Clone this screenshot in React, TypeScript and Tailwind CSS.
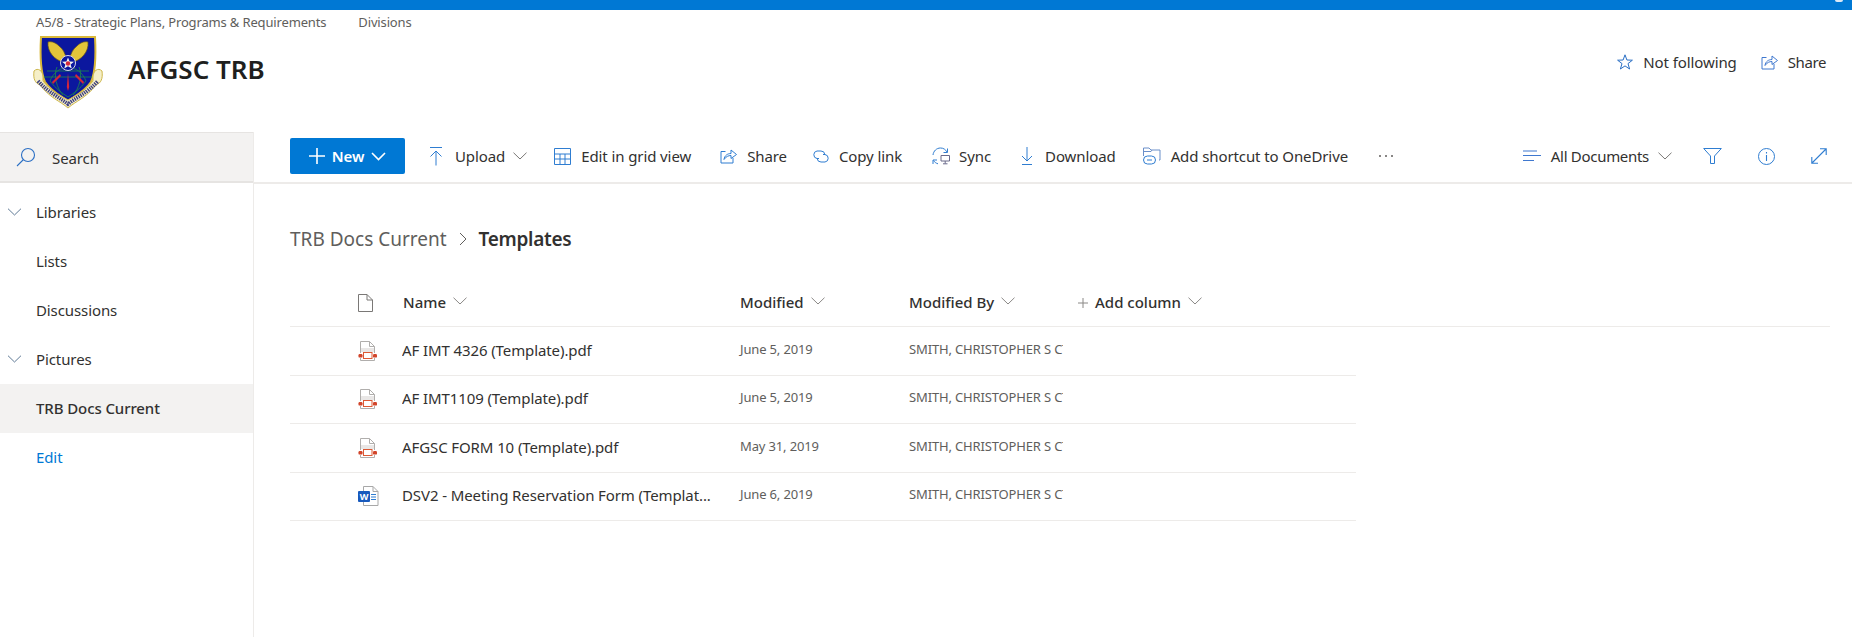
import React from "react";

function Chevron({ className = "", color = "#605e5c" }: { className?: string; color?: string }) {
  return (
    <svg className={className} width="14" height="8" viewBox="0 0 14 8" fill="none">
      <path d="M0.5 0.7 L7 7 L13.5 0.7" stroke={color} strokeWidth="1" />
    </svg>
  );
}

function Logo() {
  return (
    <svg width="72" height="74" viewBox="0 0 72 74" className="shrink-0">
      <path d="M8 2 L62 2 C63 20 63 36 58 47 C52 56 44 60 35 66 C26 60 18 56 12 47 C7 36 7 20 8 2Z" fill="#0b179e" stroke="#d9b83a" strokeWidth="2" />
      <path d="M17 46 C24 28 46 28 53 46 C47 54 41 58 35 62 C29 58 23 54 17 46Z" fill="none" stroke="#1e8a4a" strokeWidth="0.8" />
      <path d="M11 42 H59 M24 32 C20 40 24 54 30 60 M46 32 C50 40 46 54 40 60 M14 36 H56" stroke="#1e8a4a" strokeWidth="0.8" fill="none" />
      <path d="M30 27 C22 25 14 17 15 7 C19 6 23 8 26 11 C30 14 32 18 33 23Z" fill="#e3c53a" stroke="#6d5a14" strokeWidth="0.7" />
      <path d="M40 27 C48 25 56 17 55 7 C51 6 47 8 44 11 C40 14 38 18 37 23Z" fill="#e3c53a" stroke="#6d5a14" strokeWidth="0.7" />
      <circle cx="35" cy="28" r="7.5" fill="#0b179e" stroke="#d8d8e8" strokeWidth="1" />
      <path d="M35 22.5 L36.6 26.6 L41 26.8 L37.6 29.5 L38.8 33.5 L35 31.2 L31.2 33.5 L32.4 29.5 L29 26.8 L33.4 26.6Z" fill="#f4f4f4" />
      <circle cx="35" cy="28.5" r="2.2" fill="#d52b3a" />
      <path d="M35 38 L33.8 52 L35 56 L36.2 52Z M27 39 L19 47 L20 49 L28 41Z M43 39 L51 47 L50 49 L42 41Z" fill="#d4263a" />
      <path d="M1 36 C0 44 2 48 7 50 C17 63 27 66 35 73 C43 66 53 63 63 50 C68 48 70 44 69 36 C65 32 60 36 60 42 L60 46 C52 56 44 60 35 65 C26 60 18 56 10 46 L10 42 C10 36 5 32 1 36Z" fill="#f5efc8" stroke="#cdb64a" strokeWidth="1" />
      <path d="M5 46 C16 58 26 62 35 69 C44 62 54 58 65 46" fill="none" stroke="#3d3f80" strokeWidth="3.8" strokeDasharray="1.4 0.9" />
    </svg>
  );
}

function SearchIcon() {
  return (
    <svg width="20" height="20" viewBox="0 0 20 20" fill="none">
      <circle cx="12" cy="8" r="6.5" stroke="#2b6fc4" strokeWidth="1.1" />
      <path d="M7.5 12.5 L1 19" stroke="#2b6fc4" strokeWidth="1.1" />
    </svg>
  );
}

function ShareIcon({ color = "#2f7dd1" }: { color?: string }) {
  return (
    <svg width="17" height="15" viewBox="0 0 17 15" fill="none">
      <path d="M5.5 2.5 H1 V14 H13 V9" stroke={color} strokeWidth="1" />
      <path d="M4 10.5 C4.5 6.5 7.5 4.5 11 4.5 V1 L16.5 5.5 L11 9.5 V6.5 C8.5 6.5 6 7.5 4 10.5Z" stroke={color} strokeWidth="1" />
    </svg>
  );
}

function UploadIcon() {
  return (
    <svg width="14" height="19" viewBox="0 0 14 19" fill="none">
      <path d="M1 0.5 H13 M7 18.5 V4 M1.5 9.5 L7 4 L12.5 9.5" stroke="#2f7dd1" strokeWidth="1" />
    </svg>
  );
}

function GridIcon() {
  return (
    <svg width="17" height="17" viewBox="0 0 17 17" fill="none">
      <path d="M0.5 0.5 H16.5 V16.5 H0.5Z M0.5 6 H16.5 M0.5 11 H16.5 M6 6 V16.5 M11 6 V16.5" stroke="#2f7dd1" strokeWidth="1" />
    </svg>
  );
}

function LinkIcon() {
  return (
    <svg width="18" height="13" viewBox="0 0 18 13" fill="none">
      <path d="M7 8.5 H5 A3.8 3.8 0 0 1 5 1 H9 A3.8 3.8 0 0 1 12.8 4.5" stroke="#2f7dd1" strokeWidth="1" />
      <path d="M11 4.5 H13 A3.8 3.8 0 0 1 13 12 H9 A3.8 3.8 0 0 1 5.2 8.5" stroke="#2f7dd1" strokeWidth="1" />
    </svg>
  );
}

function SyncIcon() {
  return (
    <svg width="18" height="18" viewBox="0 0 18 18" fill="none">
      <path d="M1 8 C1.5 4 4.5 1 8.5 1 C11.5 1 13.5 2.5 15 5 M15.5 1.5 V5.5 H11.5" stroke="#2f7dd1" strokeWidth="1" />
      <path d="M1 17 V13 H5 M1.5 13.5 C2.5 15 4 16.3 6 16.8" stroke="#2f7dd1" strokeWidth="1" />
      <path d="M9 8.5 H17.5 V14 H9Z M13.2 14 V16.5 M11 16.8 H15.5" stroke="#6a6a8a" strokeWidth="1" />
    </svg>
  );
}

function DownloadIcon() {
  return (
    <svg width="12" height="18" viewBox="0 0 12 18" fill="none">
      <path d="M1 17.5 H11 M6 0 V14 M1 9 L6 14 L11 9" stroke="#2f7dd1" strokeWidth="1" />
    </svg>
  );
}

function ShortcutIcon() {
  return (
    <svg width="18" height="18" viewBox="0 0 18 18" fill="none">
      <path d="M0.5 9 V1 H6 L8 3 H17 V13 H16" stroke="#6b8fc9" strokeWidth="1" />
      <path d="M0.5 4.5 H8 L9 3" stroke="#6b8fc9" strokeWidth="1" />
      <rect x="0.5" y="9" width="12" height="8" rx="4" stroke="#2f7dd1" strokeWidth="1" />
      <path d="M4 13 H9" stroke="#2f7dd1" strokeWidth="1" />
    </svg>
  );
}

function PdfIcon() {
  return (
    <svg width="19" height="20" viewBox="0 0 19 20" fill="none">
      <path d="M2.5 12 V0.5 H11.5 L16.5 5.5 V12 M16.5 17 V19.5 H2.5 V17 M11.5 0.5 V5.5 H16.5" stroke="#b0aeac" strokeWidth="1" />
      <rect x="3" y="7" width="13" height="4" fill="#e9e7e6" />
      <rect x="5.5" y="11.5" width="8.5" height="6" stroke="#dc5a35" strokeWidth="1" fill="#fff" />
      <rect x="0.5" y="13" width="4" height="3.6" rx="1.2" fill="#d2452a" />
      <rect x="15" y="13" width="4" height="3.6" rx="1.2" fill="#d2452a" />
    </svg>
  );
}

function WordIcon() {
  return (
    <svg width="21" height="20" viewBox="0 0 21 20" fill="none">
      <path d="M5.5 5 V0.5 H15 L20 5.5 V19.5 H5.5 V16" stroke="#a8a8a8" strokeWidth="1" fill="#fff" />
      <path d="M15 0.5 V5.5 H20" stroke="#a8a8a8" strokeWidth="1" />
      <path d="M13 8.5 H18 M13 11 H18 M13 13.5 H18" stroke="#2f7dd1" strokeWidth="1" />
      <rect x="0" y="5" width="12" height="11" rx="1" fill="#185abd" />
      <text x="6" y="14" textAnchor="middle" fontSize="9" fontWeight="700" fill="#fff" fontFamily="Noto Sans, sans-serif">W</text>
    </svg>
  );
}

function ToolItem({
  icon,
  label,
  chevron,
  gap = "gap-[9px]",
  className = "",
  labelClass = "",
}: {
  icon: React.ReactNode;
  label: string;
  chevron?: boolean;
  gap?: string;
  className?: string;
  labelClass?: string;
}) {
  return (
    <div className={`flex items-center ${gap} ${className}`}>
      {icon}
      <span className={`text-[15px] text-[#323130] whitespace-nowrap ${labelClass}`}>{label}</span>
      {chevron && <Chevron className="-ml-[4px]" color="#7a7876" />}
    </div>
  );
}

const navItems = [
  { label: "Libraries", chevron: true },
  { label: "Lists" },
  { label: "Discussions" },
  { label: "Pictures", chevron: true },
  { label: "TRB Docs Current", active: true },
  { label: "Edit", link: true },
];

const files = [
  { name: "AF IMT 4326 (Template).pdf", date: "June 5, 2019", type: "pdf" },
  { name: "AF IMT1109 (Template).pdf", date: "June 5, 2019", type: "pdf" },
  { name: "AFGSC FORM 10 (Template).pdf", date: "May 31, 2019", type: "pdf" },
  { name: "DSV2 - Meeting Reservation Form (Templat...", date: "June 6, 2019", type: "word" },
];

function HeaderCell({ label, className = "" }: { label: string; className?: string }) {
  return (
    <div className={`flex items-center gap-[7px] ${className}`}>
      <span className="text-[15px] font-medium text-[#323130] whitespace-nowrap tracking-normal">{label}</span>
      <Chevron className="-mt-[3px]" color="#8a8886" />
    </div>
  );
}

export default function App() {
  return (
    <div
      className="w-[1852px] h-[637px] overflow-hidden bg-white flex flex-col tracking-[-0.1px]"
      style={{ fontFamily: '"Noto Sans", "Open Sans", sans-serif' }}
    >
      <div className="h-[10px] bg-[#0078d4] shrink-0 relative">
        <div className="absolute right-[9px] top-0 w-[8px] h-[2px] rounded-b-full bg-[#dce9f6]" />
      </div>

      <header className="h-[122px] shrink-0 flex flex-col">
        <nav className="h-[25px] pl-[36px] flex items-center gap-[32px] text-[13px] text-[#605e5c] tracking-[-0.15px]">
          <span>A5/8 - Strategic Plans, Programs &amp; Requirements</span>
          <span>Divisions</span>
        </nav>
        <div className="flex items-start pl-[33px] pr-[26px]">
          <Logo />
          <h1 className="ml-[23px] mt-[18px] text-[26px] font-semibold leading-[32px] text-[#201f1e] tracking-normal">AFGSC TRB</h1>
          <div className="ml-auto mt-[16px] flex items-center gap-[24px]">
            <ToolItem
              gap="gap-[10px]"
              icon={
                <svg width="16" height="16" viewBox="0 0 16 16" fill="none">
                  <path d="M8 0.8 L9.9 6 L15.4 6.2 L11 9.6 L12.6 15 L8 11.9 L3.4 15 L5 9.6 L0.6 6.2 L6.1 6Z" stroke="#2b6fc4" strokeWidth="1" />
                </svg>
              }
              label="Not following"
            />
            <ToolItem gap="gap-[10px]" icon={<ShareIcon color="#3f78cf" />} label="Share" labelClass="tracking-[-0.4px]" />
          </div>
        </div>
      </header>

      <div className="flex-1 flex min-h-0">
        <aside className="w-[254px] shrink-0 border-r border-[#edebe9] flex flex-col">
          <div className="h-[51px] bg-[#f3f2f1] border-t border-b-2 border-[#e6e4e2] flex items-center pl-[16px] gap-[16px] shrink-0">
            <SearchIcon />
            <span className="text-[15px] text-[#323130] mt-[2px]">Search</span>
          </div>
          <ul className="pt-[5px]">
            {navItems.map((n) => (
              <li
                key={n.label}
                className={`h-[49px] flex items-center pl-[36px] relative text-[15px] ${
                  n.active ? "bg-[#f3f2f1] font-medium text-[#323130]" : n.link ? "text-[#0078d4]" : "text-[#323130]"
                }`}
              >
                {n.chevron && <Chevron className="absolute left-[7px] top-[20px] w-[15px]" color="#5f7a96" />}
                {n.label}
              </li>
            ))}
          </ul>
        </aside>

        <main className="flex-1 min-w-0 flex flex-col">
          <div className="h-[52px] shrink-0 border-b-2 border-[#edebe9] flex items-center pl-[36px] pr-[25px] pb-[2px]">
            <div className="w-[115px] h-[36px] rounded-[2px] bg-[#0078d4] flex items-center justify-center gap-[7px] text-white shrink-0">
              <svg width="16" height="16" viewBox="0 0 16 16" fill="none">
                <path d="M8 0 V16 M0 8 H16" stroke="#fff" strokeWidth="1.6" />
              </svg>
              <span className="text-[15px] font-semibold">New</span>
              <svg width="15" height="9" viewBox="0 0 15 9" fill="none">
                <path d="M1 1 L7.5 7.5 L14 1" stroke="#fff" strokeWidth="1.6" />
              </svg>
            </div>
            <div className="ml-[24px] flex items-center gap-[27px]">
              <ToolItem gap="gap-[12px]" icon={<UploadIcon />} label="Upload" chevron />
              <ToolItem gap="gap-[10px]" icon={<GridIcon />} label="Edit in grid view" />
              <ToolItem gap="gap-[10px]" className="ml-[2px]" icon={<ShareIcon />} label="Share" />
              <ToolItem gap="gap-[9px]" className="-ml-[2px]" icon={<LinkIcon />} label="Copy link" />
              <ToolItem gap="gap-[9px]" className="ml-[3px]" icon={<SyncIcon />} label="Sync" />
              <ToolItem gap="gap-[12px]" className="ml-[3px]" icon={<DownloadIcon />} label="Download" />
              <ToolItem gap="gap-[10px]" icon={<ShortcutIcon />} label="Add shortcut to OneDrive" />
              <div className="flex gap-[4px] ml-[4px]">
                <span className="w-[2px] h-[2px] rounded-full bg-[#605e5c]" />
                <span className="w-[2px] h-[2px] rounded-full bg-[#605e5c]" />
                <span className="w-[2px] h-[2px] rounded-full bg-[#605e5c]" />
              </div>
            </div>
            <div className="ml-auto flex items-center gap-[36px]">
              <div className="flex items-center gap-[10px] -mr-[5px]">
                <svg width="18" height="12" viewBox="0 0 18 12" fill="none">
                  <path d="M0 1 H14 M0 5.5 H18 M0 10.5 H11" stroke="#3f78cf" strokeWidth="1.1" />
                </svg>
                <span className="text-[15px] text-[#323130] tracking-[-0.3px]">All Documents</span>
                <Chevron className="ml-[-1px]" color="#7a7876" />
              </div>
              <svg width="19" height="16" viewBox="0 0 19 16" fill="none">
                <path d="M0.7 0.5 H18.3 L11.5 8 V15.5 H7.5 V8Z" stroke="#2f7dd1" strokeWidth="1" />
              </svg>
              <svg width="17" height="17" viewBox="0 0 17 17" fill="none">
                <circle cx="8.5" cy="8.5" r="8" stroke="#2f7dd1" strokeWidth="1" />
                <path d="M8.5 7 V13 M8.5 4 V5.4" stroke="#2f7dd1" strokeWidth="1.1" />
              </svg>
              <svg width="16" height="16" viewBox="0 0 16 16" fill="none">
                <path d="M1 15 L15 1 M9 0.8 H15.2 V7 M0.8 9 V15.2 H7" stroke="#2f7dd1" strokeWidth="1.1" />
              </svg>
            </div>
          </div>

          <div className="pl-[36px] pr-[22px] flex flex-col">
            <div className="mt-[41px] h-[28px] flex items-center text-[19px] tracking-normal">
              <span className="text-[#605e5c]">TRB Docs Current</span>
              <svg className="mx-[12px]" width="8" height="14" viewBox="0 0 8 14" fill="none">
                <path d="M1 1 L7 7 L1 13" stroke="#605e5c" strokeWidth="1" />
              </svg>
              <span className="font-semibold text-[#323130] tracking-[-0.3px]">Templates</span>
            </div>

            <div className="mt-[26px] h-[48px] border-b border-[#edebe9] flex items-center">
              <div className="w-[112px] pl-[68px] shrink-0">
                <svg width="15" height="18" viewBox="0 0 15 18" fill="none">
                  <path d="M0.5 0.5 H9 L14.5 6 V17.5 H0.5Z M9 0.5 V6 H14.5" stroke="#7a7876" strokeWidth="1" />
                </svg>
              </div>
              <HeaderCell label="Name" className="w-[338px] pl-[1px] shrink-0" />
              <HeaderCell label="Modified" className="w-[169px] shrink-0" />
              <HeaderCell label="Modified By" className="w-[169px] shrink-0" />
              <div className="flex items-center">
                <svg className="mr-[7px]" width="10" height="10" viewBox="0 0 10 10" fill="none">
                  <path d="M5 0 V10 M0 5 H10" stroke="#8a8886" strokeWidth="1" />
                </svg>
                <HeaderCell label="Add column" />
              </div>
            </div>

            <div className="w-[1066px]">
              {files.map((f) => (
                <div key={f.name} className="h-[48.5px] border-b border-[#edebe9] flex items-center">
                  <div className="w-[112px] pl-[68px] shrink-0">
                    {f.type === "pdf" ? <PdfIcon /> : <WordIcon />}
                  </div>
                  <span className="w-[338px] shrink-0 text-[15px] text-[#323130] whitespace-nowrap overflow-hidden -mt-[2px]">{f.name}</span>
                  <span className="w-[169px] shrink-0 text-[13px] text-[#605e5c] -mt-[3px] tracking-[-0.15px]">{f.date}</span>
                  <span className="w-[154px] shrink-0 text-[13px] text-[#605e5c] whitespace-nowrap overflow-hidden -mt-[3px] tracking-[-0.15px]">SMITH, CHRISTOPHER S CTR USAF</span>
                </div>
              ))}
            </div>
          </div>
        </main>
      </div>
    </div>
  );
}
